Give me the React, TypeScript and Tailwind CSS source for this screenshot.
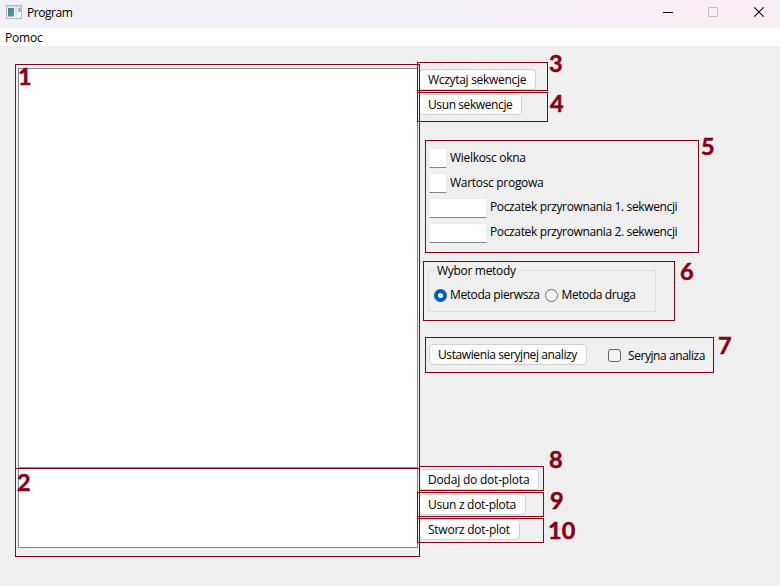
import React from "react";
import { clsx } from "clsx";

function Button({ children, className }: { children: string; className: string }) {
  return (
    <button
      className={clsx(
        "flex h-[21px] items-center rounded-[4px] border border-[#d0d0d0] bg-[#fdfdfd] pl-2 leading-[19px] whitespace-nowrap",
        className,
      )}
    >
      {children}
    </button>
  );
}

function Field({ label, wide }: { label: string; wide?: boolean }) {
  return (
    <label className="flex h-5 items-center gap-[3px] whitespace-nowrap">
      <span
        className={clsx(
          "h-5 border border-[#ebebeb] border-b-[#868686] bg-white",
          wide ? "w-[58px]" : "w-[18px]",
        )}
      />
      <span className={clsx("leading-5", wide ? "-mt-[2px] tracking-[-0.36px]" : "tracking-[-0.3px]")}>{label}</span>
    </label>
  );
}

function Radio({ label, checked }: { label: string; checked?: boolean }) {
  return (
    <label className="flex items-center gap-[3px] whitespace-nowrap">
      <span
        className={clsx(
          "size-[13px] rounded-full",
          checked ? "border-4 border-[#005fb8] bg-white" : "border border-[#6b6b6b] bg-[#f5f5f5]",
        )}
      />
      <span className="leading-4 tracking-[-0.4px]">{label}</span>
    </label>
  );
}

const frames = [
  "left-[15px] top-[64px] w-[405px] h-[405px]",
  "left-[15px] top-[468px] w-[405px] h-[89px]",
  "left-[417px] top-[62px] w-[131px] h-[29px]",
  "left-[417px] top-[92px] w-[131px] h-[30px]",
  "left-[425px] top-[140px] w-[274px] h-[113px]",
  "left-[423px] top-[261px] w-[252px] h-[60px]",
  "left-[425px] top-[337px] w-[289px] h-[36px]",
  "left-[419px] top-[466px] w-[125px] h-[25px]",
  "left-[417px] top-[492px] w-[127px] h-[25px]",
  "left-[417px] top-[518px] w-[127px] h-[25px]",
];

const numbers = [
  "left-[18px] top-[63px]",
  "left-[17px] top-[469px]",
  "left-[549px] top-[50px]",
  "left-[550px] top-[90px]",
  "left-[701px] top-[133px]",
  "left-[680px] top-[258px]",
  "left-[718px] top-[332px]",
  "left-[549px] top-[446px]",
  "left-[550px] top-[487px]",
  "left-[548px] top-[517px]",
];

export default function App() {
  return (
    <div className="relative flex h-[586px] w-[780px] flex-col overflow-hidden bg-[#efefef] font-['Open_Sans','Noto_Sans',sans-serif] text-[12px] text-black">
      <header className="flex h-7 shrink-0 items-center bg-linear-to-r from-[#f2f0f7] from-50% to-[#f9edf6] to-85% pl-[6px]">
        <svg width="16" height="14" viewBox="0 0 16 14" className="-mt-[4px]">
          <defs>
            <linearGradient id="pane" x1="0" y1="0" x2="1" y2="1">
              <stop offset="0" stopColor="#4b78a8" />
              <stop offset="1" stopColor="#4fa878" />
            </linearGradient>
          </defs>
          <rect x=".5" y=".5" width="15" height="13" fill="#f3f5f6" stroke="#b2b8bd" />
          <rect x="1" y="1" width="14" height="1.5" fill="#d5dbe0" />
          <rect x="2" y="3" width="6" height="8.5" fill="url(#pane)" />
          <rect x="9" y="3" width="2.5" height="8.5" fill="#dfe2e2" />
          <rect x="12.5" y="3" width="2" height="4" fill="#79aeb0" />
        </svg>
        <span className="ml-[5px] -mt-[2px] tracking-[-0.45px]">Program</span>
        <svg width="105" height="12" viewBox="0 0 105 12" fill="none" className="ml-auto mr-[13px] -mt-[4px]">
          <path d="M1 6.5h10" stroke="#000" />
          <rect x="46.5" y="1.5" width="9" height="9" rx=".6" stroke="#c5bdc4" />
          <path d="M92.3 1.3l9.4 9.4M101.7 1.3L92.3 10.7" stroke="#111" strokeWidth="1.2" />
        </svg>
      </header>
      <nav className="h-[18px] shrink-0 bg-white pl-[5px] leading-[19px] tracking-[-0.2px]">Pomoc</nav>
      <main className="flex grow pl-[18px] pt-[22px]">
        <section className="flex w-[400px] shrink-0 flex-col">
          <div className="h-[400px] border border-[#828790] bg-white" />
          <div className="h-[80px] border border-[#828790] bg-white" />
        </section>
        <section className="flex flex-col items-start pl-px pt-px">
          <Button className="w-[117px] tracking-[-0.3px]">Wczytaj sekwencje</Button>
          <Button className="mt-1 w-[103px] tracking-[-0.4px]">Usun sekwencje</Button>
          <div className="mt-[33px] flex flex-col gap-[5px] pl-[10px]">
            <Field label="Wielkosc okna" />
            <Field label="Wartosc progowa" />
            <Field label="Poczatek przyrownania 1. sekwencji" wide />
            <Field label="Poczatek przyrownania 2. sekwencji" wide />
          </div>
          <fieldset className="ml-[9px] mt-[19px] h-[50px] w-[228px] border border-[#dcdcdc] pl-[5px]">
            <legend className="ml-[1px] h-4 px-[2px] leading-[18px] tracking-[-0.3px]">Wybor metody</legend>
            <div className="flex gap-[6px] pt-[9px]">
              <Radio label="Metoda pierwsza" checked />
              <Radio label="Metoda druga" />
            </div>
          </fieldset>
          <div className="ml-[10px] mt-8 flex items-center">
            <Button className="w-[158px] tracking-[-0.4px]">Ustawienia seryjnej analizy</Button>
            <label className="ml-[21px] mt-px flex h-4 items-center gap-[7px] whitespace-nowrap">
              <span className="size-[13px] rounded-[3px] border border-[#626262] bg-[#f5f5f5]" />
              <span className="h-4 leading-[18px] tracking-[-0.43px]">Seryjna analiza</span>
            </label>
          </div>
          <div className="mt-[104px] flex flex-col gap-1">
            <Button className="w-[120px] tracking-[-0.2px]">Dodaj do dot-plota</Button>
            <Button className="w-[107px] tracking-[-0.28px]">Usun z dot-plota</Button>
            <Button className="w-[101px] tracking-[-0.25px]">Stworz dot-plot</Button>
          </div>
        </section>
      </main>
      {frames.map((place) => (
        <div key={place} className={clsx("pointer-events-none absolute border border-[#880015]", place)} />
      ))}
      {numbers.map((place, i) => (
        <span
          key={place}
          className={clsx(
            "absolute font-['Lato',sans-serif] text-[23.5px] leading-[26px] font-bold text-[#880015] [-webkit-text-stroke:0.5px_#880015]",
            place,
          )}
        >
          {i + 1}
        </span>
      ))}
    </div>
  );
}
